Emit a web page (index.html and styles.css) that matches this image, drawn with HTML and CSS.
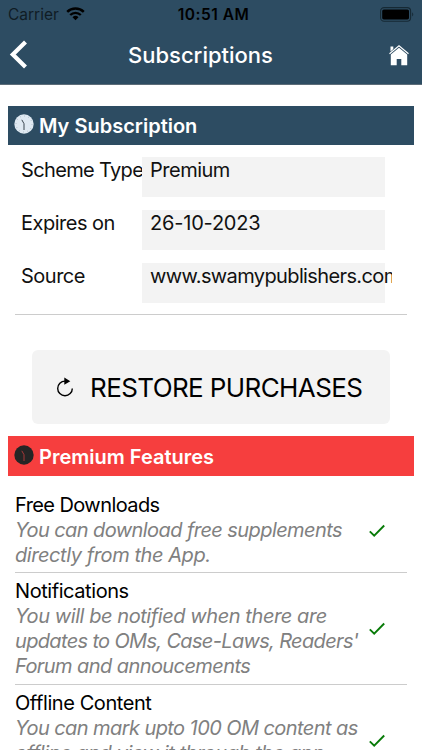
FILE: index.html
```html
<!DOCTYPE html>
<html lang="en">
<head>
    <meta charset="UTF-8">
    <meta name="viewport" content="width=device-width, initial-scale=1.0">
    <title>Subscriptions</title>
    <link rel="stylesheet" href="styles.css">
</head>
<body>
    <header class="header">
        <div class="status-bar">
            <div class="carrier">
                <span class="carrier-name">Carrier</span>
                <svg class="wifi" width="19" height="14" viewBox="0 0 19 14">
                    <path d="M1.2 4.8A11.8 11.8 0 0 1 17.8 4.8" fill="none" stroke="#000" stroke-width="2.5"/>
                    <path d="M4.2 8A7.5 7.5 0 0 1 14.8 8" fill="none" stroke="#000" stroke-width="2.3"/>
                    <path d="M6.5 10.2A4.3 4.3 0 0 1 12.5 10.2L9.5 13.3Z"/>
                </svg>
            </div>
            <span class="time">10:51 AM</span>
            <svg class="battery" width="35" height="15" viewBox="0 0 35 15">
                <rect x="0.6" y="0.6" width="30" height="13.6" rx="3.5" fill="none" stroke="#162934" stroke-width="1.1"/>
                <rect x="2.2" y="2.4" width="26.8" height="10" rx="1.6"/>
                <path d="M32.2 5.2Q34.3 7.4 32.2 9.6Z" fill="#162934"/>
            </svg>
        </div>
        <div class="nav-bar">
            <svg class="back" width="20" height="30" viewBox="0 0 20 30">
                <path d="M17.5 2L4.8 14.5L17.5 27" fill="none" stroke="#fff" stroke-width="4.2"/>
            </svg>
            <h1 class="title">Subscriptions</h1>
            <svg class="home" width="20" height="21" viewBox="0 0 20 21">
                <path d="M0.5 8.7L10 0.8L19.5 8.7" fill="none" stroke="#fff" stroke-width="1.2"/>
                <path d="M1.5 1.5H4.3V4L1.5 6.4Z" fill="#fff"/>
                <path d="M10 2.8L18.2 9.6V20.3H12.3V14H7.7V20.3H1.8V9.6Z" fill="#fff"/>
            </svg>
        </div>
    </header>

    <main class="content">
        <h2 class="section-title">
            <svg class="clock" width="20" height="20" viewBox="0 0 20 20">
                <circle cx="10" cy="10" r="9.7" fill="#dfe9f2"/>
                <circle cx="10" cy="10" r="8" fill="none" stroke="#8799a8" stroke-width="1" stroke-dasharray="0.5 3.69"/>
                <path d="M7.8 5.8L10 9.7V16" fill="none" stroke="#3a4650" stroke-width="1"/>
            </svg>
            <span>My Subscription</span>
        </h2>
        <div class="details">
            <div class="row">
                <span class="label scheme">Scheme Type</span>
                <span class="value"><span class="value-text">Premium</span></span>
            </div>
            <div class="row">
                <span class="label">Expires on</span>
                <span class="value"><span class="value-text date">26-10-2023</span></span>
            </div>
            <div class="row">
                <span class="label">Source</span>
                <span class="value"><span class="value-text site">www.swamypublishers.com</span></span>
            </div>
        </div>
        <button class="restore" type="button">
            <svg class="reload" width="18" height="20" viewBox="0 0 18 20">
                <path d="M10.5 4.1H9A7.3 7.3 0 1 0 16.3 11.4" fill="none" stroke="#000" stroke-width="1.4"/>
                <path d="M8.3 0.6L14.3 4.2L8.3 7.8Z"/>
            </svg>
            <span>RESTORE PURCHASES</span>
        </button>

        <h2 class="section-title premium-title">
            <svg class="clock" width="20" height="20" viewBox="0 0 20 20">
                <circle cx="10" cy="10" r="9.7" fill="#252525"/>
                <path d="M7.8 5.8L10 9.7V16" fill="none" stroke="#b63b3b" stroke-width="0.9"/>
            </svg>
            <span>Premium Features</span>
        </h2>
        <ul class="features">
            <li class="feature">
                <div class="feature-text">
                    <h3>Free Downloads</h3>
                    <p>You can download free supplements<br><span class="loose">directly from the App.</span></p>
                </div>
                <svg class="check" width="16" height="14" viewBox="0 0 16 14">
                    <path d="M0.8 7.3L5.2 11.7L15.2 1.5" fill="none" stroke="#087b08" stroke-width="1.9"/>
                </svg>
            </li>
            <li class="feature">
                <div class="feature-text">
                    <h3 class="loose">Notifications</h3>
                    <p><span class="loose">You will be notified when there are</span><br><span class="tight">updates to OMs, Case-Laws, Readers'</span><br>Forum and annoucements</p>
                </div>
                <svg class="check" width="16" height="14" viewBox="0 0 16 14">
                    <path d="M0.8 7.3L5.2 11.7L15.2 1.5" fill="none" stroke="#087b08" stroke-width="1.9"/>
                </svg>
            </li>
            <li class="feature">
                <div class="feature-text">
                    <h3 class="loose">Offline Content</h3>
                    <p>You can mark upto 100 OM content as<br><span class="loose">offline and view it through the app</span><br>without internet</p>
                </div>
                <svg class="check" width="16" height="14" viewBox="0 0 16 14">
                    <path d="M0.8 7.3L5.2 11.7L15.2 1.5" fill="none" stroke="#087b08" stroke-width="1.9"/>
                </svg>
            </li>
        </ul>
    </main>
</body>
</html>
```

FILE: styles.css
```css
* {
    box-sizing: border-box;
}

body {
    margin: 0;
    height: 750px;
    overflow: hidden;
    font-family: Inter, "Liberation Sans", sans-serif;
    background-color: #fff;
    color: #111;
}

h1, h2, h3, p, ul {
    margin: 0;
    padding: 0;
}

svg {
    display: block;
    flex: none;
}

.header {
    height: 85px;
    background-color: #2d4c62;
    border-bottom: 1px solid #5c6c78;
}

.status-bar {
    display: grid;
    grid-template-columns: 1fr auto 1fr;
    align-items: center;
    height: 28px;
    padding: 0 7px 0 8px;
    color: #000;
}

.carrier {
    display: flex;
    align-items: center;
    gap: 7px;
}

.carrier-name {
    font-size: 15.5px;
    color: #101c25;
}

.time {
    font-size: 15.5px;
    font-weight: 600;
    letter-spacing: 0.5px;
    padding-left: 4px;
}

.battery {
    justify-self: end;
}

.nav-bar {
    display: flex;
    align-items: center;
    height: 54px;
    padding: 0 13px 0 8px;
}

.title {
    font-size: 22px;
    font-weight: 500;
    line-height: 30px;
    color: #fff;
    margin-left: 100px;
}

.home {
    margin-left: auto;
}

.content {
    padding: 21px 8px 0;
}

.section-title {
    display: flex;
    gap: 5px;
    height: 39px;
    padding: 8px 6px 0;
    background-color: #2d4c62;
    color: #fff;
    font-size: 20px;
    font-weight: 600;
    line-height: 24px;
}

.details {
    margin: 0 7px;
    padding: 12px 0 11px 6px;
    border-bottom: 1px solid #ccc;
    display: flex;
    flex-direction: column;
    gap: 13px;
}

.row {
    display: flex;
    height: 40px;
    font-size: 20px;
    line-height: 26px;
    letter-spacing: -0.5px;
    white-space: nowrap;
}

.label {
    width: 121px;
}

.scheme {
    letter-spacing: -0.65px;
}

.value {
    width: 243px;
    background-color: #f3f3f3;
    padding-left: 8px;
}

.value-text {
    display: block;
    width: 242px;
    overflow: hidden;
}

.date {
    letter-spacing: -0.2px;
}

.site {
    letter-spacing: -0.62px;
}

.restore {
    display: flex;
    align-items: center;
    width: 358px;
    height: 74px;
    margin: 35px 0 12px 24px;
    padding: 0 0 0 24px;
    border: none;
    border-radius: 6px;
    background-color: #f3f3f3;
    font-family: inherit;
    font-size: 26px;
    letter-spacing: -0.6px;
    color: #000;
    gap: 16px;
    white-space: nowrap;
}

.premium-title {
    height: 40px;
    padding-top: 9px;
    background-color: #f63e3e;
}

.features {
    margin: 0 7px;
    padding-top: 10px;
    list-style: none;
}

.feature {
    display: flex;
    justify-content: space-between;
    align-items: center;
    padding: 6px 22px 5px 0;
    border-bottom: 1px solid #ccc;
    font-size: 20px;
    line-height: 25px;
    letter-spacing: -0.58px;
    white-space: nowrap;
}

.feature:first-child {
    padding-top: 7px;
    padding-bottom: 4px;
}

.feature h3 {
    font-size: 20px;
    font-weight: 400;
    color: #000;
}

.feature p {
    color: #808080;
    font-style: italic;
}

.feature .loose {
    letter-spacing: -0.43px;
}

.feature .tight {
    letter-spacing: -0.66px;
}
```
